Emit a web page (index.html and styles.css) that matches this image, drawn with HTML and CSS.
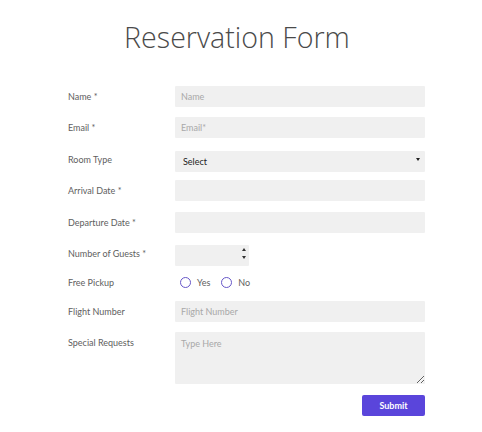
FILE: index.html
```
<!DOCTYPE html>
<html>
<head>
<meta charset="utf-8">
<link rel="stylesheet" href="styles.css">
</head>
<body>
<h1 class="title">Reservation Form</h1>
<form class="form">
  <label class="lbl">Name *</label>
  <input class="field" type="text" placeholder="Name">
  <label class="lbl">Email *</label>
  <input class="field" type="text" placeholder="Email*">
  <label class="lbl">Room Type</label>
  <div class="select-wrap">
    <select class="field select"><option>Select</option></select>
    <span class="caret"></span>
  </div>
  <label class="lbl">Arrival Date *</label>
  <input class="field" type="text">
  <label class="lbl">Departure Date *</label>
  <input class="field" type="text">
  <label class="lbl">Number of Guests *</label>
  <div class="num-wrap">
    <input class="field num" type="text">
    <span class="spin up"></span>
    <span class="spin down"></span>
  </div>
  <label class="lbl">Free Pickup</label>
  <div class="radios">
    <label class="opt"><input class="radio" type="radio" name="p">Yes</label>
    <label class="opt"><input class="radio" type="radio" name="p">No</label>
  </div>
  <label class="lbl">Flight Number</label>
  <input class="field" type="text" placeholder="Flight Number">
  <label class="lbl lbl-top">Special Requests</label>
  <textarea class="field area" placeholder="Type Here"></textarea>
  <div class="actions">
    <button class="submit" type="button">Submit</button>
  </div>
</form>
</body>
</html>
```
FILE: styles.css
```
html, body {
  margin: 0;
  padding: 0;
  background: #fff;
}
body {
  width: 482px;
  font-family: Lato, "Liberation Sans", sans-serif;
}
.title {
  margin: 18px 0 0 0;
  padding-right: 8px;
  text-align: center;
  font-family: "Open Sans", sans-serif;
  font-weight: 300;
  font-size: 28.6px;
  line-height: 38px;
  color: #4a4a4a;
}
.form {
  margin: 30px 0 0 68px;
  display: grid;
  grid-template-columns: 107px 250px;
  row-gap: 10.4px;
  align-items: center;
}
.lbl {
  font-size: 9px;
  color: #606060;
}
.lbl-top {
  align-self: start;
  padding-top: 5px;
}
.field {
  box-sizing: border-box;
  width: 250px;
  height: 21px;
  margin: 0;
  border: none;
  border-radius: 1px;
  background: #f0f0f0;
  font-family: Lato, "Liberation Sans", sans-serif;
  font-size: 9px;
  color: #333;
  padding: 0 6px;
  outline: none;
}
.field::placeholder {
  color: #a8a8a8;
}
.select-wrap, .num-wrap {
  position: relative;
  height: 21px;
}
.select {
  appearance: none;
  -webkit-appearance: none;
  padding-left: 8px;
  color: #222;
}
.caret {
  position: absolute;
  right: 5px;
  top: 9px;
  width: 0;
  height: 0;
  border-left: 2px solid transparent;
  border-right: 2px solid transparent;
  border-top: 3px solid #222;
}
.num {
  width: 74px;
}
.num-wrap {
  width: 74px;
}
.spin {
  position: absolute;
  right: 3px;
  width: 0;
  height: 0;
  border-left: 2px solid transparent;
  border-right: 2px solid transparent;
}
.spin.up {
  top: 5px;
  border-bottom: 3px solid #333;
}
.spin.down {
  top: 13px;
  border-top: 3px solid #333;
}
.radios {
  display: flex;
  align-items: center;
  gap: 11px;
  height: 16px;
  padding-left: 5px;
}
.opt {
  display: flex;
  align-items: center;
  gap: 6px;
  font-size: 9px;
  color: #606060;
}
.radio {
  appearance: none;
  -webkit-appearance: none;
  box-sizing: border-box;
  width: 11px;
  height: 11px;
  margin: 0;
  border: 1.6px solid #6656c8;
  border-radius: 50%;
  background: #fff;
}
.area {
  height: 52px;
  padding: 6px 6px;
  resize: vertical;
  display: block;
}
.actions {
  grid-column: 2;
  display: flex;
  justify-content: flex-end;
}
.submit {
  width: 63px;
  height: 21px;
  border: none;
  border-radius: 2px;
  background: #5a45db;
  color: #fff;
  font-family: Lato, "Liberation Sans", sans-serif;
  font-weight: 700;
  font-size: 9px;
  padding: 0;
}
```
